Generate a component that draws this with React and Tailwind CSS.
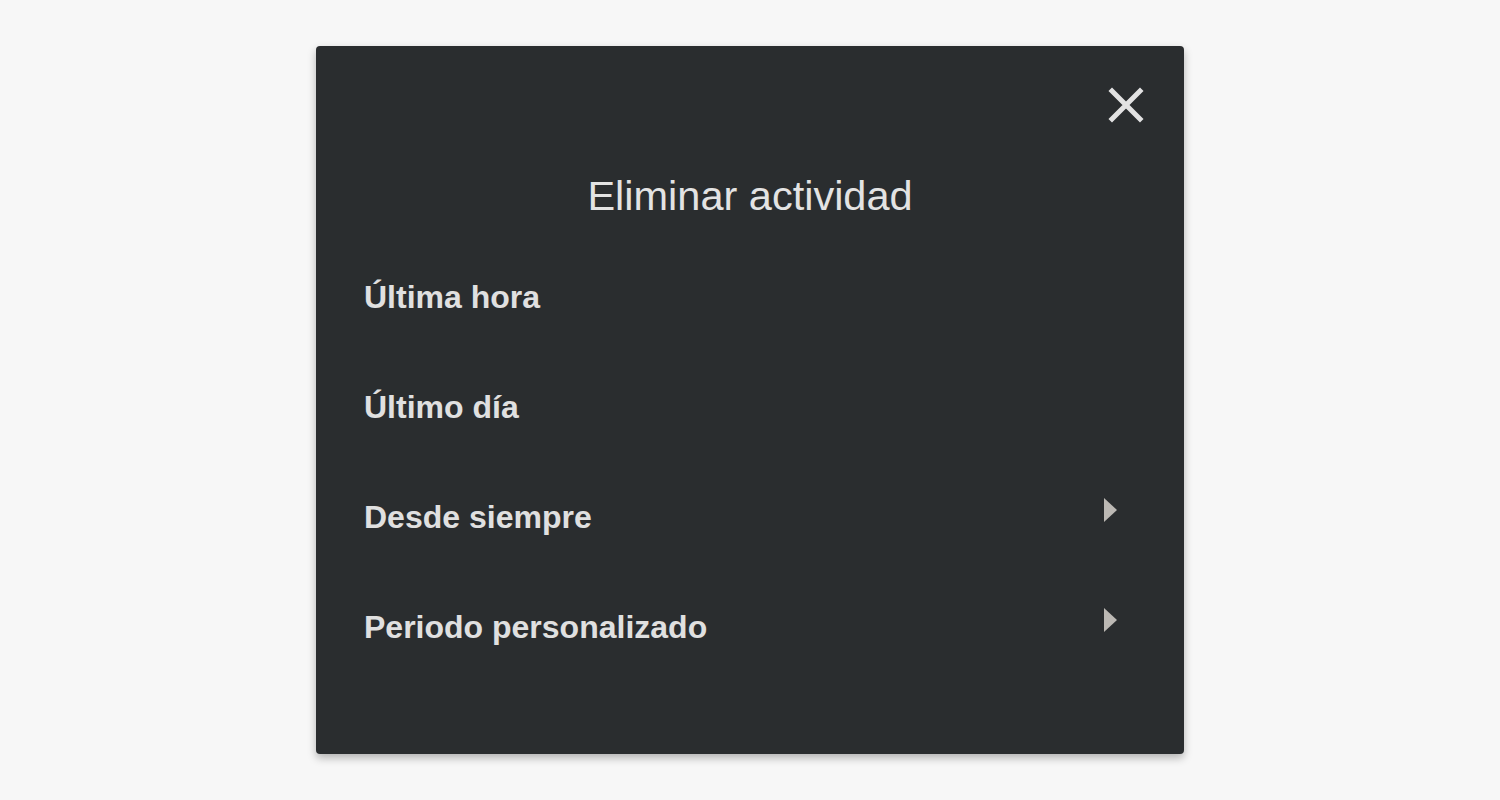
const items = [
  { label: 'Última hora', more: false },
  { label: 'Último día', more: false },
  { label: 'Desde siempre', more: true },
  { label: 'Periodo personalizado', more: true },
];

const Arrow = () => (
  <svg width="13" height="24" viewBox="0 0 13 24" className="-translate-y-[7px]">
    <path d="M0 0 L13 12 L0 24 Z" fill="#bcb9b4" />
  </svg>
);

const CloseIcon = () => (
  <svg width="36" height="36" viewBox="0 0 36 36">
    <path d="M4 4 L32 32 M32 4 L4 32" stroke="#e2e2e2" strokeWidth="5" strokeLinecap="square" />
  </svg>
);

const App = () => {
  return (
    <div className="min-h-screen w-full bg-[#f7f7f7] flex justify-center pt-[46px] font-['Liberation_Sans',Arial,sans-serif]">
      <div className="w-[868px] h-[708px] bg-[#2a2d2f] rounded-[4px] shadow-[0_4px_8px_rgba(0,0,0,0.28)] flex flex-col">
        {/* Close */}
        <div className="flex justify-end pt-[41px] pr-[39px]">
          <button className="w-[38px] h-[36px] flex items-center justify-center">
            <CloseIcon />
          </button>
        </div>

        {/* Title */}
        <h2 className="mt-[49px] h-[48px] leading-[48px] text-center text-[41.5px] text-[#e3e3e3] font-normal">
          Eliminar actividad
        </h2>

        {/* Options */}
        <div className="mt-[22px] flex flex-col">
          {items.map((item) => (
            <div
              key={item.label}
              className="h-[110px] flex items-center justify-between pl-[48px] pr-[67px] cursor-pointer"
            >
              <span className="text-[32px] font-bold text-[#e0e0e0]">{item.label}</span>
              {item.more && <Arrow />}
            </div>
          ))}
        </div>
      </div>
    </div>
  );
};

export default App;
